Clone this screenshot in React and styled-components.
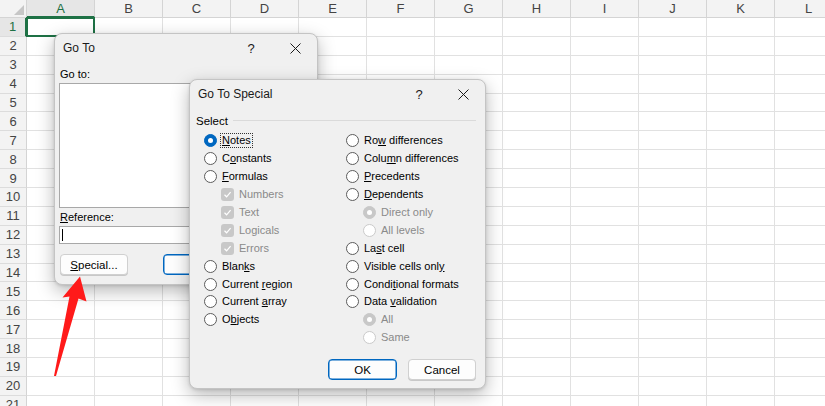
import React from "react";
import styled, { createGlobalStyle } from "styled-components";

const GlobalStyle = createGlobalStyle`
  body {
    margin: 0;
    background: #fff;
    font-family: "Liberation Sans", Arial, sans-serif;
  }
`;

const COLUMNS = ["A", "B", "C", "D", "E", "F", "G", "H", "I", "J", "K", "L", "M"];
const ROW_COUNT = 22;

const LEFT_OPTIONS = [
  { label: "Notes", k: 0, checked: true, focus: true },
  { label: "Constants", k: 1 },
  { label: "Formulas", k: 0 },
  { label: "Numbers", box: true, sub: true, disabled: true, checked: true },
  { label: "Text", box: true, sub: true, disabled: true, checked: true },
  { label: "Logicals", box: true, sub: true, disabled: true, checked: true },
  { label: "Errors", box: true, sub: true, disabled: true, checked: true },
  { label: "Blanks", k: 4 },
  { label: "Current region", k: 8 },
  { label: "Current array", k: 8 },
  { label: "Objects", k: 1 },
];

const RIGHT_OPTIONS = [
  { label: "Row differences", k: 2 },
  { label: "Column differences", k: 4 },
  { label: "Precedents", k: 0 },
  { label: "Dependents", k: 0 },
  { label: "Direct only", sub: true, disabled: true, checked: true },
  { label: "All levels", sub: true, disabled: true },
  { label: "Last cell", k: 2 },
  { label: "Visible cells only", k: 17 },
  { label: "Conditional formats", k: 5 },
  { label: "Data validation", k: 5 },
  { label: "All", sub: true, disabled: true, checked: true },
  { label: "Same", sub: true, disabled: true },
];

const Mnemonic = ({ text, k }) => {
  if (k === undefined || k < 0) return text;
  return (
    <>
      {text.slice(0, k)}
      <Key>{text[k]}</Key>
      {text.slice(k + 1)}
    </>
  );
};

const CloseIcon = () => (
  <svg width="11" height="11" viewBox="0 0 11 11">
    <path d="M0.5 0.5 L10.5 10.5 M10.5 0.5 L0.5 10.5" stroke="#1a1a1a" strokeWidth="1" fill="none" />
  </svg>
);

const CheckMark = () => (
  <svg width="9" height="9" viewBox="0 0 9 9">
    <path d="M1.5 4.8 L3.6 6.8 L7.6 2.2" stroke="#fff" strokeWidth="1.2" fill="none" />
  </svg>
);

const Caption = ({ title }) => (
  <TitleBar>
    <Title>{title}</Title>
    <CaptionButton>?</CaptionButton>
    <CaptionButton>
      <CloseIcon />
    </CaptionButton>
  </TitleBar>
);

const Option = ({ item }) => (
  <OptionRow $sub={item.sub} $disabled={item.disabled}>
    {item.box ? (
      <CheckBox $disabled={item.disabled}>{item.checked && <CheckMark />}</CheckBox>
    ) : (
      <Radio $checked={item.checked} $disabled={item.disabled} />
    )}
    <OptionLabel $focus={item.focus}>
      <Mnemonic text={item.label} k={item.k} />
    </OptionLabel>
  </OptionRow>
);

const App = () => {
  return (
    <>
      <GlobalStyle />
      <Sheet>
        <Grid>
          <Corner />
          {COLUMNS.map((c) => (
            <ColHeader key={c} $selected={c === "A"}>
              {c}
            </ColHeader>
          ))}
          {Array.from({ length: ROW_COUNT }, (_, i) => (
            <React.Fragment key={i}>
              <RowHeader $selected={i === 0}>{i + 1}</RowHeader>
              {COLUMNS.map((c) => (
                <Cell key={c} $active={i === 0 && c === "A"} />
              ))}
            </React.Fragment>
          ))}
        </Grid>

        <Dialog $x={54} $y={33} $w={264} $h={252}>
          <Caption title="Go To" />
          <GoToBody>
            <FieldLabel $gap={5}>Go to:</FieldLabel>
            <ListBox />
            <FieldLabel $gap={2}>
              <Mnemonic text="Reference:" k={0} />
            </FieldLabel>
            <TextInput>
              <Caret />
            </TextInput>
            <ButtonRow>
              <Button $w={68}>
                <Mnemonic text="Special..." k={0} />
              </Button>
              <Button $w={70} $primary>
                OK
              </Button>
            </ButtonRow>
          </GoToBody>
        </Dialog>

        <Dialog $x={189} $y={79} $w={297} $h={310}>
          <Caption title="Go To Special" />
          <SpecialBody>
            <GroupHeader>Select</GroupHeader>
            <Options>
              <OptionColumn>
                {LEFT_OPTIONS.map((o) => (
                  <Option key={o.label} item={o} />
                ))}
              </OptionColumn>
              <OptionColumn>
                {RIGHT_OPTIONS.map((o) => (
                  <Option key={o.label} item={o} />
                ))}
              </OptionColumn>
            </Options>
            <Footer>
              <Button $w={69} $primary>
                OK
              </Button>
              <Button $w={68}>Cancel</Button>
            </Footer>
          </SpecialBody>
        </Dialog>

        <Arrow viewBox="0 0 825 406" width="825" height="406">
          <polygon
            points="80,276.5 86.5,301.5 78.5,298.5 56,376 54,376 69.5,296.5 62.5,297.5"
            fill="#ff1a1a"
          />
        </Arrow>
      </Sheet>
    </>
  );
};

const Sheet = styled.div`
  position: relative;
  width: 825px;
  height: 406px;
  overflow: hidden;
  background: #fff;
`;

const Grid = styled.div`
  display: grid;
  grid-template-columns: 27px repeat(13, 68px);
  grid-template-rows: 18px repeat(${ROW_COUNT}, 18.9px);
`;

const Corner = styled.div`
  position: relative;
  background: #f3f3f3;
  border-right: 1px solid #d4d4d4;
  border-bottom: 1px solid #d4d4d4;
  box-sizing: border-box;

  &::after {
    content: "";
    position: absolute;
    right: 2px;
    bottom: 2px;
    border-style: solid;
    border-width: 0 0 10px 10px;
    border-color: transparent transparent #c6c6c6 transparent;
  }
`;

const ColHeader = styled.div`
  display: flex;
  align-items: center;
  justify-content: center;
  box-sizing: border-box;
  background: ${(p) => (p.$selected ? "#e6e6e6" : "#f3f3f3")};
  color: ${(p) => (p.$selected ? "#1e7145" : "#444")};
  border-right: 1px solid #d4d4d4;
  border-bottom: ${(p) => (p.$selected ? "2px solid #1e7145" : "1px solid #d4d4d4")};
  font-size: 13px;
  padding-top: ${(p) => (p.$selected ? "1px" : "0")};
`;

const RowHeader = styled.div`
  display: flex;
  align-items: center;
  justify-content: center;
  box-sizing: border-box;
  background: ${(p) => (p.$selected ? "#e6e6e6" : "#f3f3f3")};
  color: ${(p) => (p.$selected ? "#1e7145" : "#444")};
  border-right: ${(p) => (p.$selected ? "2px solid #1e7145" : "1px solid #d4d4d4")};
  border-bottom: 1px solid #dcdcdc;
  font-size: 13px;
`;

const Cell = styled.div`
  position: relative;
  box-sizing: border-box;
  border-right: 1px solid #e1e1e1;
  border-bottom: 1px solid #e1e1e1;

  ${(p) =>
    p.$active &&
    `
    &::after {
      content: "";
      position: absolute;
      left: -1px;
      top: -1px;
      right: -1px;
      bottom: -1px;
      border: 2px solid #1e7145;
    }
  `}
`;

const Dialog = styled.div`
  position: absolute;
  left: ${(p) => p.$x}px;
  top: ${(p) => p.$y}px;
  width: ${(p) => p.$w}px;
  height: ${(p) => p.$h}px;
  box-sizing: border-box;
  display: flex;
  flex-direction: column;
  background: #f0f0f0;
  border: 1px solid #c4c4c4;
  border-radius: 8px;
  box-shadow: 0 6px 18px rgba(0, 0, 0, 0.28), 0 1px 3px rgba(0, 0, 0, 0.12);
  font-size: 11px;
  color: #000;
`;

const TitleBar = styled.div`
  display: flex;
  align-items: center;
  height: 28px;
  flex: none;
  padding-left: 8px;
`;

const Title = styled.div`
  flex: 1;
  font-size: 12px;
  color: #1a1a1a;
`;

const CaptionButton = styled.div`
  width: 44px;
  height: 28px;
  display: flex;
  align-items: center;
  justify-content: center;
  font-size: 13px;
  color: #1a1a1a;
`;

const GoToBody = styled.div`
  display: flex;
  flex-direction: column;
  padding: 0 9px 0 4px;
`;

const FieldLabel = styled.div`
  line-height: 14px;
  margin: ${(p) => p.$gap}px 0 2px 1px;
`;

const ListBox = styled.div`
  height: 125px;
  background: #fff;
  border: 1px solid #a8a8a8;
  box-sizing: border-box;
`;

const TextInput = styled.div`
  height: 18px;
  margin-top: 0;
  background: #fff;
  border: 1px solid #a8a8a8;
  box-sizing: border-box;
  display: flex;
  align-items: center;
  padding-left: 2px;
`;

const Caret = styled.div`
  width: 1px;
  height: 12px;
  background: #000;
`;

const ButtonRow = styled.div`
  display: flex;
  gap: 35px;
  margin: 10px 0 0 1px;
`;

const Button = styled.div`
  width: ${(p) => p.$w}px;
  height: 21px;
  box-sizing: border-box;
  display: flex;
  align-items: center;
  justify-content: center;
  background: #fdfdfd;
  border: 1px solid ${(p) => (p.$primary ? "#0067c0" : "#d0d0d0")};
  box-shadow: ${(p) => (p.$primary ? "inset 0 0 0 0.5px #0067c0" : "0 1px 0 #c8c8c8")};
  border-radius: 4px;
  font-size: 11.5px;
`;

const SpecialBody = styled.div`
  flex: 1;
  display: flex;
  flex-direction: column;
  padding: 0 9px 8px 6px;
`;

const GroupHeader = styled.div`
  display: flex;
  align-items: center;
  gap: 5px;
  line-height: 14px;
  margin-top: 6px;
  font-size: 11.5px;

  &::after {
    content: "";
    flex: 1;
    height: 1px;
    background: #dadada;
    margin-top: -1px;
  }
`;

const Options = styled.div`
  display: grid;
  grid-template-columns: 142px 1fr;
  padding-left: 8px;
  margin-top: 4px;
`;

const OptionColumn = styled.div`
  display: flex;
  flex-direction: column;
`;

const OptionRow = styled.div`
  height: 17.9px;
  display: flex;
  align-items: center;
  gap: 3px;
  padding-left: ${(p) => (p.$sub ? "17px" : "0")};
  color: ${(p) => (p.$disabled ? "#8a8a8a" : "#000")};
`;

const Radio = styled.div`
  width: 13px;
  height: 13px;
  box-sizing: border-box;
  border-radius: 50%;
  flex: none;
  position: relative;
  background: ${(p) => (p.$checked ? (p.$disabled ? "#c8c8c8" : "#0067c0") : "#fff")};
  border: 1px solid
    ${(p) => (p.$checked ? (p.$disabled ? "#c8c8c8" : "#0067c0") : p.$disabled ? "#cacaca" : "#5c5c5c")};

  &::after {
    content: "";
    display: ${(p) => (p.$checked ? "block" : "none")};
    position: absolute;
    left: 3px;
    top: 3px;
    width: 5px;
    height: 5px;
    border-radius: 50%;
    background: #fff;
  }
`;

const CheckBox = styled.div`
  width: 13px;
  height: 13px;
  flex: none;
  border-radius: 3px;
  background: #c8c8c8;
  display: flex;
  align-items: center;
  justify-content: center;
`;

const OptionLabel = styled.span`
  padding: 0 1px;
  border: 1px dotted ${(p) => (p.$focus ? "#333" : "transparent")};
  line-height: 13px;
  white-space: nowrap;
`;

const Key = styled.span`
  text-decoration: underline;
  text-underline-offset: 1px;
`;

const Footer = styled.div`
  margin-top: auto;
  display: flex;
  justify-content: flex-end;
  gap: 11px;
`;

const Arrow = styled.svg`
  position: absolute;
  left: 0;
  top: 0;
  pointer-events: none;
`;

export default App;
